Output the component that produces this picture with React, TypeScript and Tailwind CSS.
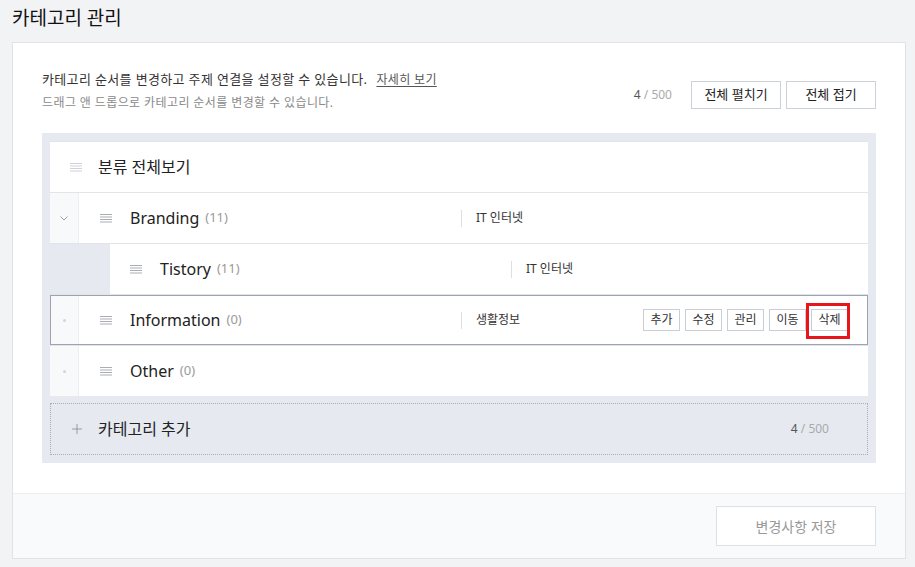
import { Plus } from "lucide-react";

const font = { fontFamily: "'Noto Sans', 'Noto Sans CJK KR', sans-serif" };

function DragIcon({ light }: { light?: boolean }) {
  return (
    <svg width="12" height="9" viewBox="0 0 12 9" className="shrink-0">
      {[0.5, 3, 5.5, 8].map((y) => (
        <line key={y} x1="0" x2="12" y1={y} y2={y} stroke={light ? "#cfd2d8" : "#a9adb4"} strokeWidth="1" />
      ))}
    </svg>
  );
}

function Chevron() {
  return (
    <svg width="8" height="5" viewBox="0 0 8 5">
      <path d="M0.5 0.5 L4 4 L7.5 0.5" fill="none" stroke="#9aa0a8" strokeWidth="1" />
    </svg>
  );
}

function Dot() {
  return <span className="block w-[3px] h-[3px] rounded-full bg-[#d3d6db]" />;
}

function Count({ n }: { n: number }) {
  return <span className="ml-[6px] text-[13px] text-[#9a9a9a]">({n})</span>;
}

function Topic({ label }: { label: string }) {
  return (
    <div className="flex items-center">
      <span className="w-px h-[17px] bg-[#dcdfe4]" />
      <span className="ml-[14px] text-[12px] text-[#333]">{label}</span>
    </div>
  );
}

const actions = ["추가", "수정", "관리", "이동", "삭제"];

export default function App() {
  return (
    <div className="min-h-[567px] bg-[#f2f3f5] pb-[8px]" style={font}>
      <h1 className="pl-[12px] pt-[4px] h-[42px] text-[19px] leading-[28px] text-[#111]">카테고리 관리</h1>

      <div className="ml-[12px] w-[894px] border border-[#e0e2e7] bg-white">
        <div className="px-[29px] pt-[25px] pb-[30px]">
          <div className="flex items-end justify-between">
            <div className="leading-[23px]">
              <p className="text-[13px] text-[#333] tracking-[0.35px]">
                카테고리 순서를 변경하고 주제 연결을 설정할 수 있습니다.
                <span className="ml-[9px] text-[12px] text-[#555] underline underline-offset-2">자세히 보기</span>
              </p>
              <p className="text-[12px] text-[#8a8a8a] tracking-[0.4px]">드래그 앤 드롭으로 카테고리 순서를 변경할 수 있습니다.</p>
            </div>
            <div className="flex items-center mb-[5px]">
              <span className="text-[12px] text-[#555] mr-[19px]">
                4 <span className="text-[#aaa]">/ 500</span>
              </span>
              <button className="w-[90px] h-[28px] border border-[#cdd1d8] bg-white text-[13px] text-[#222]">전체 펼치기</button>
              <button className="ml-[5px] w-[90px] h-[28px] border border-[#cdd1d8] bg-white text-[13px] text-[#222]">전체 접기</button>
            </div>
          </div>

          <div className="mt-[19px] bg-[#e6e9f0] px-[8px] pt-[8px] pb-[8px]">
            <div className="flex flex-col gap-px bg-[#e1e4ea] border-t border-[#e1e4ea]">
              {/* 분류 전체보기 */}
              <div className="h-[50px] bg-white flex items-center pl-[20px]">
                <DragIcon light />
                <span className="ml-[16px] text-[16px] text-[#222]">분류 전체보기</span>
              </div>

              {/* Branding */}
              <div className="h-[50px] bg-white flex items-center">
                <div className="w-[29px] h-full bg-[#f8f9fb] border-r border-[#eceef2] flex items-center justify-center">
                  <Chevron />
                </div>
                <div className="ml-[21px] w-[361px] flex items-center">
                  <DragIcon />
                  <span className="ml-[18px] text-[16px] text-[#222]">Branding</span>
                  <Count n={11} />
                </div>
                <Topic label="IT 인터넷" />
              </div>

              {/* Tistory */}
              <div className="h-[50px] bg-[#e6e9f0] flex">
                <div className="ml-[60px] flex-1 bg-white flex items-center pl-[20px]">
                  <div className="w-[381px] flex items-center">
                    <DragIcon />
                    <span className="ml-[18px] text-[16px] text-[#222]">Tistory</span>
                    <Count n={11} />
                  </div>
                  <Topic label="IT 인터넷" />
                </div>
              </div>

              {/* Information */}
              <div className="relative h-[50px] bg-white flex items-center outline outline-1 -outline-offset-1 outline-[#9ea4ae] z-10">
                <div className="w-[29px] h-full bg-[#f8f9fb] border-r border-[#eceef2] flex items-center justify-center">
                  <Dot />
                </div>
                <div className="ml-[21px] w-[361px] flex items-center">
                  <DragIcon />
                  <span className="ml-[18px] text-[16px] text-[#222]">Information</span>
                  <Count n={0} />
                </div>
                <Topic label="생활정보" />
                <div className="ml-auto mr-[20px] flex gap-[5px]">
                  {actions.map((a) => (
                    <button key={a} className="w-[37px] h-[22px] border border-[#c9cdd4] bg-white text-[12px] text-[#333] leading-none">
                      {a}
                    </button>
                  ))}
                </div>
                <span className="absolute left-[756px] top-[8px] w-[44px] h-[36px] border-[3px] border-[#e8151b] pointer-events-none" />
              </div>

              {/* Other */}
              <div className="h-[50px] bg-white flex items-center">
                <div className="w-[29px] h-full bg-[#f8f9fb] border-r border-[#eceef2] flex items-center justify-center">
                  <Dot />
                </div>
                <div className="ml-[21px] flex items-center">
                  <DragIcon />
                  <span className="ml-[18px] text-[16px] text-[#222]">Other</span>
                  <Count n={0} />
                </div>
              </div>
            </div>

            <div className="mt-[7px] h-[52px] border border-dotted border-[#a8acb4] flex items-center pl-[18px] pr-[38px]">
              <Plus size={16} strokeWidth={1} color="#777" />
              <span className="ml-[13px] text-[16px] text-[#222]">카테고리 추가</span>
              <span className="ml-auto text-[12px] text-[#555]">
                4 <span className="text-[#aaa]">/ 500</span>
              </span>
            </div>
          </div>
        </div>

        <div className="h-[65px] bg-[#f9fafb] border-t border-[#eceef2] flex items-center justify-end pr-[29px]">
          <button className="w-[160px] h-[40px] border border-[#dde1e7] bg-white text-[14px] text-[#999]">변경사항 저장</button>
        </div>
      </div>
    </div>
  );
}
